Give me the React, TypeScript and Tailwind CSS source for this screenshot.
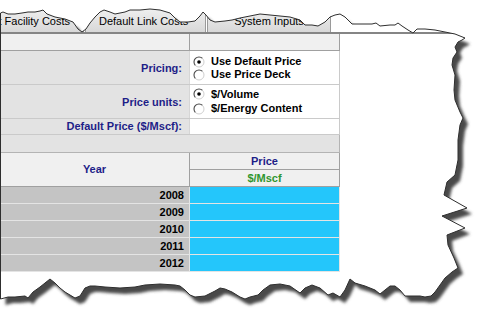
import React from "react";

const PTS: [number, number][] = [
  [0, 13], [3, 12], [8, 14], [15, 14], [22, 13], [28, 12], [35, 12], [40, 11], [43, 10], [47, 14],
  [55, 17], [65, 19], [73, 22], [78, 29], [82, 32], [86, 29], [90, 23], [95, 17], [100, 12], [104, 10],
  [110, 12], [115, 14], [120, 13], [125, 12], [130, 10], [140, 10], [150, 9], [160, 10], [170, 13],
  [175, 18], [180, 22], [188, 22], [195, 21], [200, 16], [203, 12], [206, 15], [210, 20], [215, 22],
  [225, 21], [232, 20], [240, 18], [250, 16], [260, 14], [270, 15], [280, 16], [290, 17], [300, 20],
  [305, 25], [312, 25], [318, 26], [325, 22], [330, 17], [335, 15], [340, 14], [345, 17], [348, 20],
  [352, 24], [362, 24], [372, 24], [376, 23], [380, 26], [390, 25], [395, 25], [398, 23], [402, 26],
  [408, 30], [413, 33], [417, 29], [425, 29], [435, 30], [445, 32], [455, 34], [465, 38],
  [462, 40], [458, 42], [455, 47], [457, 52], [453, 58], [452, 65], [455, 75], [454, 90], [455, 100],
  [460, 112], [463, 118], [460, 125], [458, 140], [458, 160], [455, 175], [447, 182], [444, 195],
  [467, 208], [442, 216], [465, 228], [447, 235], [448, 245], [454, 258], [458, 268], [452, 272],
  [445, 278], [440, 285], [435, 292], [431, 296],
  [425, 297], [420, 296], [413, 296], [405, 296], [400, 290], [395, 286], [390, 286], [385, 290],
  [380, 294], [375, 290], [365, 286], [355, 283], [350, 279], [345, 290], [340, 297], [333, 293],
  [328, 295], [320, 288], [312, 285], [305, 288], [300, 293], [290, 286], [280, 284], [270, 285],
  [263, 290], [258, 295], [250, 297], [245, 299], [240, 297], [232, 292], [225, 289], [220, 288],
  [215, 291], [205, 296], [195, 297], [190, 295], [185, 290], [180, 286], [175, 285], [160, 284],
  [145, 285], [135, 287], [120, 288], [105, 287], [95, 286], [90, 286], [85, 288], [80, 296],
  [75, 298], [70, 295], [65, 292], [60, 288], [55, 283], [50, 279], [45, 283], [40, 287], [33, 292],
  [28, 298], [25, 296], [15, 297], [8, 297], [0.5, 299],
];

const polyD =
  "M0.5 13 " + PTS.slice(1).map(([x, y]) => `L${x} ${y}`).join(" ") + " Z";
const outsideD = "M-10 -10 H500 V340 H-10 Z " + polyD;

function Radio({ checked }: { checked?: boolean }) {
  return (
    <svg width="12" height="12" viewBox="0 0 12 12" className="shrink-0">
      <circle cx="6" cy="6" r="5" fill="#ffffff" />
      <path d="M2.46 9.54 A5 5 0 0 1 9.54 2.46" fill="none" stroke="#4a4a4a" strokeWidth="1.1" />
      <path d="M9.54 2.46 A5 5 0 0 1 2.46 9.54" fill="none" stroke="#d0d0d0" strokeWidth="1" />
      {checked && <circle cx="6" cy="6" r="1.8" fill="#000000" />}
    </svg>
  );
}

function Option({ checked, label, h }: { checked?: boolean; label: string; h: string }) {
  return (
    <div className={`flex items-center gap-[6px] ${h}`}>
      <Radio checked={checked} />
      <span className="font-bold text-black leading-[13px]">{label}</span>
    </div>
  );
}

const years = ["2008", "2009", "2010", "2011", "2012"];

export default function App() {
  return (
    <div className="relative w-[489px] h-[324px] overflow-hidden bg-white font-['Liberation_Sans',Arial,sans-serif] text-[11px] text-black">
      {/* Tabs */}
      <div className="flex h-[32px] items-stretch pt-[2px]">
        <div className="flex w-[84px] items-end justify-end overflow-hidden whitespace-nowrap border-r border-[#9a9a9a] bg-gradient-to-b from-[#f6f6f6] to-[#d8d8d8] pb-[4px] pr-[13px] leading-[13px]">
          Plant Facility Costs
        </div>
        <div className="ml-[1px] flex w-[121px] items-end whitespace-nowrap border-x border-[#9a9a9a] bg-gradient-to-b from-[#f6f6f6] to-[#d8d8d8] pb-[4px] pl-[13px] leading-[13px]">
          Default Link Costs
        </div>
        <div className="ml-[1px] flex w-[124px] items-end justify-center whitespace-nowrap border-x border-[#9a9a9a] bg-gradient-to-b from-[#f6f6f6] to-[#d8d8d8] pb-[4px] leading-[13px]">
          System Inputs
        </div>
      </div>
      <div className="h-[2px] w-[470px] bg-[#858585]" />

      {/* Table */}
      <div className="w-[340px]">
        <div className="flex h-[17px] border-b border-[#a0a0a0]">
          <div className="w-[190px] border-r border-[#a0a0a0] bg-[#f0f0f0]" />
          <div className="w-[150px] border-r border-[#a0a0a0] bg-[#f0f0f0]" />
        </div>

        <div className="flex h-[34px] border-b border-[#cacaca]">
          <div className="flex w-[190px] items-center justify-end border-r border-[#d6d6d6] bg-[#e3e3e3] pr-[7px] pt-[1px] font-bold text-[#1e1e88]">
            Pricing:
          </div>
          <div className="flex w-[150px] flex-col border-r border-[#cacaca] bg-white pl-[3px] pt-[4px]">
            <Option checked label="Use Default Price" h="h-[13px]" />
            <Option label="Use Price Deck" h="h-[13px]" />
          </div>
        </div>

        <div className="flex h-[34px] border-b border-[#cacaca]">
          <div className="flex w-[190px] items-center justify-end border-r border-[#d6d6d6] bg-[#e3e3e3] pr-[7px] pt-[1px] font-bold text-[#1e1e88]">
            Price units:
          </div>
          <div className="flex w-[150px] flex-col border-r border-[#cacaca] bg-white pl-[3px] pt-[2px]">
            <Option checked label="$/Volume" h="h-[14px]" />
            <Option label="$/Energy Content" h="h-[15px]" />
          </div>
        </div>

        <div className="flex h-[16px] border-b border-[#cacaca]">
          <div className="flex w-[190px] items-center justify-end border-r border-[#d6d6d6] bg-[#e3e3e3] pr-[7px] font-bold leading-[13px] text-[#1e1e88]">
            Default Price ($/Mscf):
          </div>
          <div className="w-[150px] border-r border-[#cacaca] bg-white" />
        </div>

        <div className="h-[18px] border-b border-r border-[#b4b4b4] bg-[#e3e3e3]" />

        <div className="flex h-[34px] border-b border-[#a0a0a0]">
          <div className="flex w-[190px] items-center justify-center border-r border-[#a0a0a0] bg-[#f0f0f0] font-bold text-[#1e1e88]">
            Year
          </div>
          <div className="flex w-[150px] flex-col border-r border-[#a0a0a0] bg-[#f0f0f0]">
            <div className="flex h-[17px] items-center justify-center border-b border-[#a0a0a0] font-bold text-[#1e1e88]">
              Price
            </div>
            <div className="flex h-[16px] items-center justify-center font-bold text-[#2f962f]">
              $/Mscf
            </div>
          </div>
        </div>

        {years.map((y) => (
          <div key={y} className="flex h-[17px] border-b border-[#e4e4e4]">
            <div className="flex w-[190px] items-center justify-end border-r border-[#e4e4e4] bg-[#c4c4c4] pr-[5px] font-bold leading-[13px]">
              {y}
            </div>
            <div className="w-[150px] border-r border-[#e4e4e4] bg-[#24c6fb]" />
          </div>
        ))}
      </div>

      {/* Torn paper edge overlay */}
      <svg className="absolute inset-0" width="489" height="324" viewBox="0 0 489 324">
        <defs>
          <filter id="blur" x="-20%" y="-20%" width="140%" height="140%">
            <feGaussianBlur stdDeviation="1.4" />
          </filter>
          <clipPath id="outside">
            <path d={outsideD} clipRule="evenodd" />
          </clipPath>
        </defs>
        <path d={outsideD} fill="#ffffff" fillRule="evenodd" />
        <g clipPath="url(#outside)">
          <path d={polyD} fill="#4a4a4a" transform="translate(5 6)" filter="url(#blur)" />
        </g>
        <path d={polyD} fill="none" stroke="#2e2e2e" strokeWidth="1" strokeLinejoin="round" />
      </svg>
    </div>
  );
}
